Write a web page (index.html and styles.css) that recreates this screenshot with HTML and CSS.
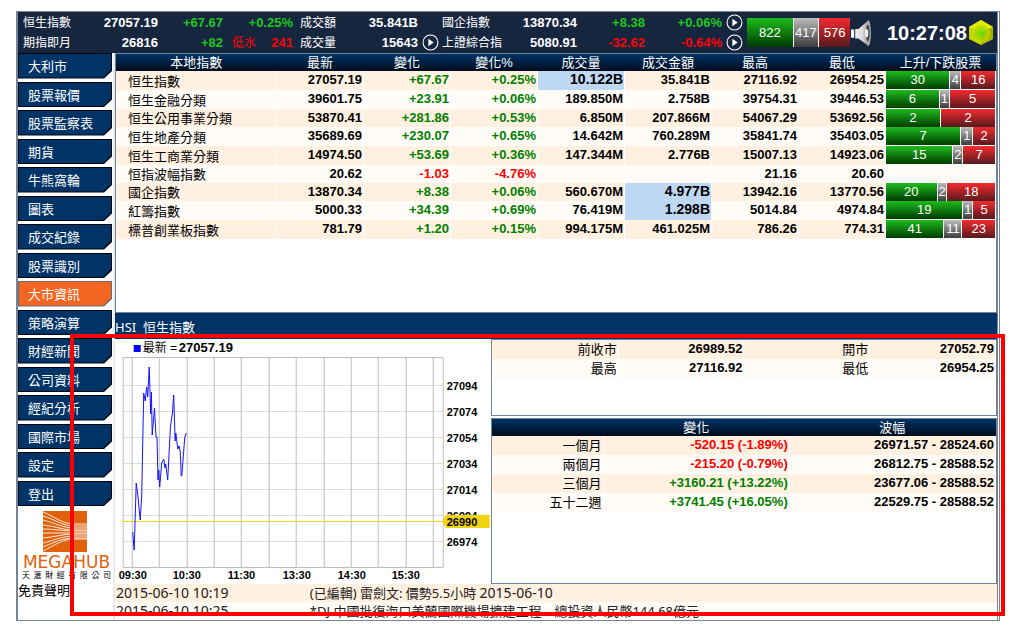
FILE: index.html
```html
<!DOCTYPE html>
<html lang="zh-Hant">
<head>
<meta charset="utf-8">
<title>大市資訊</title>
<link rel="stylesheet" href="styles.css">
</head>
<body>
<div class="app">
  <header class="top">
    <div class="quotes">
      <span class="lbl">恒生指數</span><b>27057.19</b><b class="up">+67.67</b><b class="up">+0.25%</b>
      <span class="lbl second">成交額</span><b>35.841B</b><span></span>
      <span class="lbl">國企指數</span><b>13870.34</b><b class="up">+8.38</b><b class="up">+0.06%</b>
      <button class="play" aria-label="播放國企指數"><svg viewBox="0 0 16 16"><circle cx="8" cy="8" r="7"/><path d="M6 4.500v7l5-3.500z"/></svg></button>
      <span class="lbl">期指即月</span><b>26816</b><b class="up">+82</b><span class="pair down"><span>低水</span><b>241</b></span>
      <span class="lbl second">成交量</span><b>15643</b>
      <button class="play" aria-label="播放期指"><svg viewBox="0 0 16 16"><circle cx="8" cy="8" r="7"/><path d="M6 4.500v7l5-3.500z"/></svg></button>
      <span class="lbl">上證綜合指</span><b>5080.91</b><b class="down">-32.62</b><b class="down">-0.64%</b>
      <button class="play" aria-label="播放上證綜合指"><svg viewBox="0 0 16 16"><circle cx="8" cy="8" r="7"/><path d="M6 4.500v7l5-3.500z"/></svg></button>
    </div>
    <div class="ratio total"><span class="g" style="flex-grow:46">822</span><span class="n" style="flex-grow:25">417</span><span class="r" style="flex-grow:31">576</span></div>
    <button class="sound" aria-label="聲音"><svg viewBox="0 0 21 28"><defs><linearGradient id="sp" x1="0" x2="1"><stop offset="0" stop-color="#fff"/><stop offset=".6" stop-color="#d8d8d8"/><stop offset="1" stop-color="#888"/></linearGradient></defs><path d="M1 10h3v8H1zM5 9.500h3L18 1q2.500 13 0 25L8 18.500H5z" fill="url(#sp)"/><ellipse cx="17.500" cy="13.500" rx="2.500" ry="12" fill="#aaa"/><ellipse cx="17" cy="13.500" rx="1.800" ry="8" fill="#444"/><ellipse cx="16" cy="13.500" rx="1.500" ry="4" fill="#eee"/></svg></button>
    <time class="clock">10:27:08</time>
    <svg class="cube" viewBox="0 0 28 28"><defs><radialGradient id="cb"><stop offset="0" stop-color="#4fe000"/><stop offset=".45" stop-color="#86dc00"/><stop offset="1" stop-color="#cfd800"/></radialGradient></defs><path d="M14 1l12 7v12l-12 6-12-6V8z" fill="#c6d400"/><path d="M14 1l12 7-12 5L2 8z" fill="#e6ee00"/><path d="M26 8v12l-12 6V13z" fill="#a9b400"/><circle cx="14" cy="14.500" r="9" fill="url(#cb)" opacity=".75"/></svg>
  </header>

  <div class="body">
    <aside class="side">
      <nav class="menu">
        <button><span>大利市</span></button>
        <button><span>股票報價</span></button>
        <button><span>股票監察表</span></button>
        <button><span>期貨</span></button>
        <button><span>牛熊窩輪</span></button>
        <button><span>圖表</span></button>
        <button><span>成交紀錄</span></button>
        <button><span>股票識別</span></button>
        <button class="on"><span>大市資訊</span></button>
        <button><span>策略演算</span></button>
        <button><span>財經新聞</span></button>
        <button><span>公司資料</span></button>
        <button><span>經紀分析</span></button>
        <button><span>國際市場</span></button>
        <button><span>設定</span></button>
        <button><span>登出</span></button>
      </nav>
      <div class="brand">
        <svg class="mark" viewBox="0 0 44 41"><path d="M0 0h44v41H0z" fill="#e0620d"/><g fill="none" stroke="#fff" stroke-width="1"><path d="M0 1C12 6 20 13 31 13h13M0 5c13 4 20 10 31 10h13M0 9c12 3 20 8 31 8h13M0 14c12 1 20 5 31 5h13M0 18c12 0 20 2 31 2h13M0 22h44M0 27c12-1 20-4 31-4h13M0 32c12-3 20-7 31-7h13M0 36c12-5 20-9 31-9h13M0 40c12-6 20-12 31-12h13" opacity=".85"/></g></svg>
        <div class="name">MEGAHUB</div>
        <div class="sub">天滙財經有限公司</div>
      </div>
      <a class="disclaimer" href="#">免責聲明</a>
    </aside>

    <main class="main">
      <section class="panel indices">
        <table class="grid local">
          <colgroup><col><col span="7" class="c-num"><col class="c-bar"></colgroup>
          <thead><tr><th>本地指數</th><th>最新</th><th>變化</th><th>變化%</th><th>成交量</th><th>成交金額</th><th>最高</th><th>最低</th><th>上升/下跌股票</th></tr></thead>
          <tbody>
            <tr><th>恒生指數</th><td>27057.19</td><td class="pos">+67.67</td><td class="pos">+0.25%</td><td class="hit">10.122B</td><td>35.841B</td><td>27116.92</td><td>26954.25</td><td class="bar"><div class="ratio"><span class="g" style="flex-grow:64">30</span><span class="n" style="flex-grow:10">4</span><span class="r" style="flex-grow:34">16</span></div></td></tr>
            <tr><th>恒生金融分類</th><td>39601.75</td><td class="pos">+23.91</td><td class="pos">+0.06%</td><td>189.850M</td><td>2.758B</td><td>39754.31</td><td>39446.53</td><td class="bar"><div class="ratio"><span class="g" style="flex-grow:53">6</span><span class="n" style="flex-grow:10">1</span><span class="r" style="flex-grow:45">5</span></div></td></tr>
            <tr><th>恒生公用事業分類</th><td>53870.41</td><td class="pos">+281.86</td><td class="pos">+0.53%</td><td>6.850M</td><td>207.866M</td><td>54067.29</td><td>53692.56</td><td class="bar"><div class="ratio"><span class="g" style="flex-grow:54">2</span><span class="r" style="flex-grow:54">2</span></div></td></tr>
            <tr><th>恒生地產分類</th><td>35689.69</td><td class="pos">+230.07</td><td class="pos">+0.65%</td><td>14.642M</td><td>760.289M</td><td>35841.74</td><td>35403.05</td><td class="bar"><div class="ratio"><span class="g" style="flex-grow:75">7</span><span class="n" style="flex-grow:11">1</span><span class="r" style="flex-grow:22">2</span></div></td></tr>
            <tr><th>恒生工商業分類</th><td>14974.50</td><td class="pos">+53.69</td><td class="pos">+0.36%</td><td>147.344M</td><td>2.776B</td><td>15007.13</td><td>14923.06</td><td class="bar"><div class="ratio"><span class="g" style="flex-grow:67">15</span><span class="n" style="flex-grow:9">2</span><span class="r" style="flex-grow:32">7</span></div></td></tr>
            <tr><th>恒指波幅指數</th><td>20.62</td><td class="neg">-1.03</td><td class="neg">-4.76%</td><td></td><td></td><td>21.16</td><td>20.60</td><td></td></tr>
            <tr><th>國企指數</th><td>13870.34</td><td class="pos">+8.38</td><td class="pos">+0.06%</td><td>560.670M</td><td class="hit">4.977B</td><td>13942.16</td><td>13770.56</td><td class="bar"><div class="ratio"><span class="g" style="flex-grow:51">20</span><span class="n" style="flex-grow:9">2</span><span class="r" style="flex-grow:48">18</span></div></td></tr>
            <tr><th>紅籌指數</th><td>5000.33</td><td class="pos">+34.39</td><td class="pos">+0.69%</td><td>76.419M</td><td class="hit">1.298B</td><td>5014.84</td><td>4974.84</td><td class="bar"><div class="ratio"><span class="g" style="flex-grow:77">19</span><span class="n" style="flex-grow:9">1</span><span class="r" style="flex-grow:22">5</span></div></td></tr>
            <tr><th>標普創業板指數</th><td>781.79</td><td class="pos">+1.20</td><td class="pos">+0.15%</td><td>994.175M</td><td>461.025M</td><td>786.26</td><td>774.31</td><td class="bar"><div class="ratio"><span class="g" style="flex-grow:58">41</span><span class="n" style="flex-grow:17">11</span><span class="r" style="flex-grow:33">23</span></div></td></tr>
          </tbody>
        </table>
      </section>

      <h2 class="title">HSI&nbsp; 恒生指數</h2>

      <div class="detail">
        <svg class="chart" viewBox="0 0 375 245" role="img" aria-label="恒生指數走勢">
          <path fill="#00f" d="M18 6h7v7h-7z"/>
          <text class="key" x="27" y="13">最新 =</text><text class="last" x="63" y="13">27057.19</text>
          <path class="h" d="M7 46.500h320M7 72.500h320M7 98.500h320M7 124.500h320M7 150.500h320M7 176.500h320M7 202.500h320"/>
          <path class="v" d="M16.500 18v210M43.500 18v210M71.500 18v210M98.500 18v210M125.500 18v210M153.500 18v210M180.500 18v210M208.500 18v210M235.500 18v210M262.500 18v210M290.500 18v210M317.500 18v210M7.500 18.500h320v210h-320z"/>
          <path class="y" d="M7 182.500h321"/>
          <path class="line" d="M17 193l1.500 18 2-67 1.800 14 2.200 23 1.500-24 2-103 1.500 8 1.500-14 1 10 1.500-30 1.500 47 .7-22 .8 43 2.300-27 1.500 29h1l1 43 .7-10 1 17 2-24 2-4 1.300 9 .7-4 2 16 2.700-53 2-14 1.300-18 1.400 46 .7-8 2 16 1.300-3 1.200 6 .9 24h.6l1.500-20 1.500-19 1.500-4"/>
          <g class="axis">
            <text x="331" y="51">27094</text><text x="331" y="77">27074</text><text x="331" y="103">27054</text><text x="331" y="129">27034</text><text x="331" y="155">27014</text><text x="331" y="181">26994</text><text x="331" y="207">26974</text>
            <path fill="#efd30c" d="M327 182.500l3-6.500h44v13h-44z"/><text x="331" y="187">26990</text>
            <text x="3" y="240">09:30</text><text x="57" y="240">10:30</text><text x="112" y="240">11:30</text><text x="167" y="240">13:30</text><text x="222" y="240">14:30</text><text x="276" y="240">15:30</text>
          </g>
        </svg>
        <div class="stats">
          <section class="panel day">
            <table class="grid right">
              <tbody>
                <tr><th>前收市</th><td>26989.52</td><th>開市</th><td>27052.79</td></tr>
                <tr><th>最高</th><td>27116.92</td><th>最低</th><td>26954.25</td></tr>
              </tbody>
            </table>
          </section>
          <section class="panel period">
            <table class="grid right">
              <colgroup><col class="c-period"><col class="c-change"><col></colgroup>
              <thead><tr><th></th><th>變化</th><th>波幅</th></tr></thead>
              <tbody>
                <tr><th>一個月</th><td class="neg">-520.15 (-1.89%)</td><td>26971.57 - 28524.60</td></tr>
                <tr><th>兩個月</th><td class="neg">-215.20 (-0.79%)</td><td>26812.75 - 28588.52</td></tr>
                <tr><th>三個月</th><td class="pos">+3160.21 (+13.22%)</td><td>23677.06 - 28588.52</td></tr>
                <tr><th>五十二週</th><td class="pos">+3741.45 (+16.05%)</td><td>22529.75 - 28588.52</td></tr>
              </tbody>
            </table>
          </section>
        </div>
      </div>

      <div class="news">
        <div class="item"><time>2015-06-10 10:19</time><span>(已編輯) 雷劍文: 價勢5.5小時 <time>2015-06-10</time></span></div>
        <div class="item"><time>2015-06-10 10:25</time><span>*DJ 中國批復海口美蘭國際機場擴建工程　總投資人民幣144.68億元</span></div>
      </div>
    </main>
  </div>
  <div class="callout"></div>
</div>
</body>
</html>
```

FILE: styles.css
```css
* { box-sizing: border-box; }
body {
  margin: 0;
  padding: 11px 15px 6px 16px;
  background: #fff;
  color: #000;
  font: 13px/18px "Liberation Sans", "Noto Sans CJK TC", sans-serif;
}
button { border: 0; padding: 0; background: none; font: inherit; color: inherit; cursor: pointer; }
svg { display: block; }

.app {
  position: relative;
  border: 1px solid #71849a;
  border-left-width: 2px;
  border-right: 3px double #71849a;
}

/* header */
.top { display: flex; align-items: center; height: 41px; background: #17263f; color: #fff; }
.quotes {
  flex: 1;
  display: grid;
  grid-template-columns: 60fr 75fr 65fr 70fr 48fr 77fr 24fr 68fr 67fr 68fr 77fr 25fr;
  grid-auto-rows: 20px;
  align-items: center;
  padding-left: 5px;
}
.quotes b { text-align: right; }
.lbl { font-size: 12px; white-space: nowrap; }
.second { padding-left: 7px; }
.pair { display: flex; justify-content: space-between; padding-left: 9px; font-size: 12px; }
.pair b { font-size: 13px; }
.up { color: #1ec71e; }
.down { color: #f00; }
.play { justify-self: center; width: 17px; height: 17px; }
.play circle { fill: none; stroke: #fff; }
.play path { fill: #fff; }
.sound { width: 22px; height: 28px; }
.clock { flex: 0 0 95px; text-align: right; font-size: 20px; font-weight: bold; }
.cube { width: 28px; height: 28px; margin-right: 2px; }

/* advance / decline bars */
.ratio { display: flex; gap: 1px; height: 18px; background: #fff; color: #fff; font-weight: normal; text-align: center; }
.ratio span { flex-basis: 0; min-width: 0; }
.total { width: 103px; height: 29px; line-height: 29px; }
.g { background: linear-gradient(#1dbb1d, #003c00); }
.n { background: linear-gradient(#bcbcbc, #3c3c3c); }
.r { background: linear-gradient(#f52a2e, #561a1e); }

/* sidebar */
.body { display: flex; }
.side { flex: 0 0 97px; display: flex; flex-direction: column; border-right: 2px solid #e8eaee; }
.menu { display: grid; grid-auto-rows: 1fr; gap: 3px; height: 453px; padding-right: 1px; }
.menu button {
  display: flex;
  padding: 1px;
  background: #00060f;
  color: #fff;
  text-align: left;
  clip-path: polygon(0 0, 100% 0, 100% 18px, calc(100% - 8px) 100%, 0 100%);
}
.menu span {
  flex: 1;
  align-self: stretch;
  padding: 4px 0 0 9px;
  background: #003366;
  clip-path: polygon(0 0, 100% 0, 100% 16px, calc(100% - 8px) 100%, 0 100%);
}
.menu .on { background: #6b6b6b; }
.menu .on span { background: #f26522; }
.brand { padding: 5px 2px 0 4px; }
.mark { width: 44px; height: 41px; margin-left: 21px; }
.name { font: 17px/20px "DejaVu Sans", sans-serif; color: #e0620d; text-align: center; }
.sub { font-size: 8px; line-height: 8px; text-align: justify; text-align-last: justify; }
.disclaimer { margin-top: 2px; color: #000; text-decoration: none; }

/* main area */
.main { flex: 1; min-width: 0; }
.panel { border: 1px solid #71849a; }
.grid { width: 100%; table-layout: fixed; border-collapse: collapse; line-height: 17px; }
.grid th, .grid td { padding: 0 1px; white-space: nowrap; }
.grid td { text-align: right; font-weight: bold; vertical-align: top; }
.grid tbody th { font-weight: normal; text-align: left; vertical-align: bottom; }
.grid tbody th, .grid tbody td { border-right: 1px solid #fff; }
.grid thead tr { background: linear-gradient(#003366, #000c1c); }
.grid thead th { height: 17px; color: #fff; font-weight: normal; line-height: 16px; }
.grid tbody tr:nth-child(odd) { background: #fff0e0; }
.grid tbody tr:nth-child(even) { background: #fffbf6; }
.pos { color: #008000; }
.neg { color: #f00; }

.indices { height: 260px; }
.local { height: 185px; }
.local tbody th { padding-left: 12px; }
.c-num { width: 87px; }
.c-bar { width: 110px; }
.grid .hit { background: #bed7f3; font-size: 14px; }
.grid .bar { padding: 0; background: #fff; }

.title { margin: 0; padding-top: 5px; height: 26px; background: #003366; color: #fff; font: 13px/18px "Noto Sans", "Noto Sans CJK TC", sans-serif; }

.detail { display: flex; }
.chart { flex: 376; min-width: 0; height: 245px; }
.stats { flex: 505; min-width: 0; display: flex; flex-direction: column; gap: 2px; }
.day { height: 77px; }
.period { flex: 1; }
.right { line-height: 18px; }
.right tbody th { text-align: right; }
.right tbody tr { height: 19px; }
.c-period { width: 22%; }
.c-change { width: 37%; }

.chart path.h { fill: none; stroke: #dcdcdc; }
.chart path.v { fill: none; stroke: #bdbdbd; }
.chart path.y { stroke: #efd30c; }
.chart path.line { fill: none; stroke: #1414ff; }
.key { font-size: 12px; }
.last { font-size: 13px; font-weight: bold; }
.axis { font-size: 11px; font-weight: bold; }

.news { height: 36px; overflow: hidden; color: #222; font: 13px/18px "Noto Sans", "Noto Sans CJK TC", sans-serif; }
.news time { font-size: 14px; }
.item { display: grid; grid-template-columns: 22% 1fr; height: 18px; padding-left: 1px; background: #fff0e0; white-space: nowrap; }
.item + .item { background: #fffbf6; }

.callout { position: absolute; top: 322px; right: -8px; bottom: 4px; left: 52px; border: 4px solid #f00; pointer-events: none; }
```
